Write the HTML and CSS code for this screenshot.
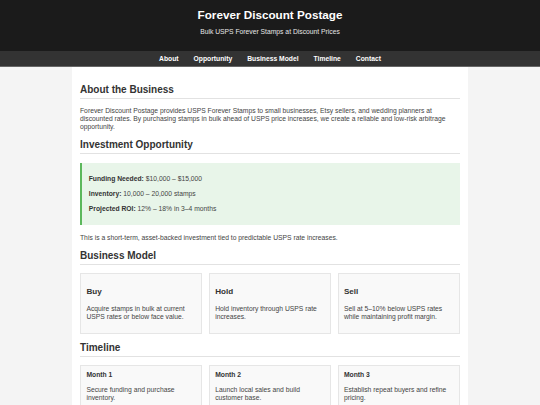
FILE: index.html
```html
<!DOCTYPE html>
<html lang="en">
<head>
<meta charset="utf-8">
<title>Forever Discount Postage</title>
<link rel="stylesheet" href="styles.css">
</head>
<body>
<header class="site-header">
  <h1 class="site-title">Forever Discount Postage</h1>
  <p class="site-tagline">Bulk USPS Forever Stamps at Discount Prices</p>
</header>
<nav class="site-nav">
  <a href="#about">About</a>
  <a href="#opportunity">Opportunity</a>
  <a href="#model">Business Model</a>
  <a href="#timeline">Timeline</a>
  <a href="#contact">Contact</a>
</nav>
<main class="container">
  <section id="about">
    <h2 class="section-title">About the Business</h2>
    <p class="text">Forever Discount Postage provides USPS Forever Stamps to small businesses, Etsy sellers, and wedding planners at discounted rates. By purchasing stamps in bulk ahead of USPS price increases, we create a reliable and low-risk arbitrage opportunity.</p>
  </section>
  <section id="opportunity">
    <h2 class="section-title">Investment Opportunity</h2>
    <div class="highlight">
      <p class="highlight-row"><strong>Funding Needed:</strong> $10,000 – $15,000</p>
      <p class="highlight-row"><strong>Inventory:</strong> 10,000 – 20,000 stamps</p>
      <p class="highlight-row"><strong>Projected ROI:</strong> 12% – 18% in 3–4 months</p>
    </div>
    <p class="text">This is a short-term, asset-backed investment tied to predictable USPS rate increases.</p>
  </section>
  <section id="model">
    <h2 class="section-title">Business Model</h2>
    <div class="grid">
      <div class="card">
        <h3 class="card-title">Buy</h3>
        <p class="card-text">Acquire stamps in bulk at current USPS rates or below face value.</p>
      </div>
      <div class="card">
        <h3 class="card-title">Hold</h3>
        <p class="card-text">Hold inventory through USPS rate increases.</p>
      </div>
      <div class="card">
        <h3 class="card-title">Sell</h3>
        <p class="card-text">Sell at 5–10% below USPS rates while maintaining profit margin.</p>
      </div>
    </div>
  </section>
  <section id="timeline">
    <h2 class="section-title">Timeline</h2>
    <div class="grid">
      <div class="card">
        <h4 class="step-title">Month 1</h4>
        <p class="card-text">Secure funding and purchase inventory.</p>
      </div>
      <div class="card">
        <h4 class="step-title">Month 2</h4>
        <p class="card-text">Launch local sales and build customer base.</p>
      </div>
      <div class="card">
        <h4 class="step-title">Month 3</h4>
        <p class="card-text">Establish repeat buyers and refine pricing.</p>
      </div>
    </div>
  </section>
  <section id="contact">
    <h2 class="section-title">Contact</h2>
    <p class="text">Interested investors are welcome to get in touch.</p>
  </section>
</main>
</body>
</html>
```
FILE: styles.css
```css
html, body {
  margin: 0;
  padding: 0;
}
body {
  background: #f4f4f4;
  font-family: "Liberation Sans", Arial, sans-serif;
  font-size: 6.75px;
  color: #444;
}
.site-header {
  background: #1b1b1b;
  color: #fff;
  text-align: center;
  padding: 8px 8px;
}
.site-title {
  margin: 0;
  font-size: 11.7px;
  font-weight: bold;
  line-height: 13.45px;
}
.site-tagline {
  margin: 6.75px 0;
  font-size: 6.75px;
  line-height: 7.76px;
  color: #e6e6e6;
}
.site-nav {
  background: #333;
  border-bottom: 1.6px solid #666;
  display: flex;
  justify-content: center;
  gap: 15px;
  padding: 4px 0;
  line-height: 7.76px;
}
.site-nav a {
  color: #fff;
  font-weight: bold;
  text-decoration: none;
}
.container {
  max-width: 380px;
  margin: 0 auto;
  background: #fff;
  padding: 8px;
}
.section-title {
  font-size: 10px;
  line-height: 11.5px;
  color: #333;
  margin: 8.3px 0;
  padding-bottom: 2.25px;
  border-bottom: 1px solid #e2e2e2;
}
.text {
  margin: 6.75px 0;
  line-height: 8px;
}
.highlight {
  background: #e8f5e9;
  border-left: 2px solid #5cb85c;
  padding: 5.4px 6.75px;
  margin: 9px 0;
}
.highlight-row {
  margin: 6.75px 0;
  line-height: 8px;
}
.highlight-row strong {
  color: #333;
}
.grid {
  display: grid;
  grid-template-columns: repeat(3, 1fr);
  gap: 6.3px;
}
.card {
  background: #f9f9f9;
  border: 1px solid #e6e6e6;
  padding: 5.4px;
}
.card-title {
  font-size: 8.1px;
  line-height: 9.3px;
  color: #333;
  margin: 8.1px 0;
}
.step-title {
  font-size: 6.75px;
  line-height: 8px;
  color: #333;
  margin: 0;
}
.card-text {
  margin: 6.75px 0;
  line-height: 7.8px;
}
```
